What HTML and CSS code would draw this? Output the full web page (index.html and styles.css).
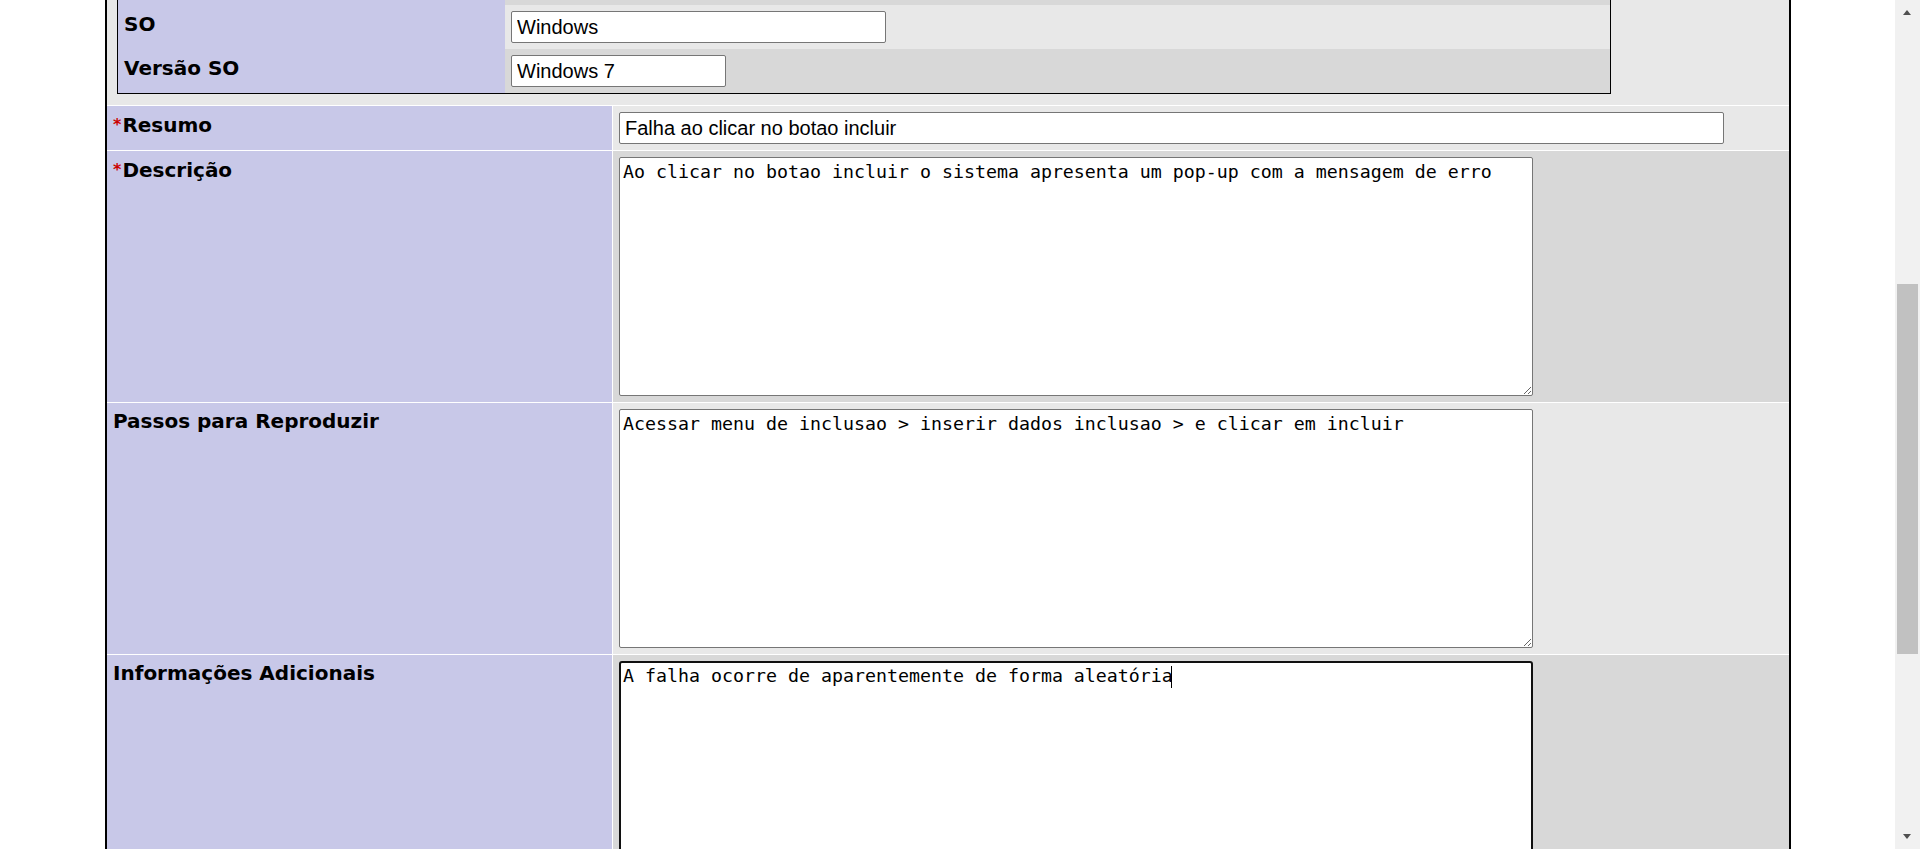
FILE: index.html
```html
<!DOCTYPE html>
<html lang="pt-BR">
<head>
<meta charset="utf-8">
<title>Reportar Caso</title>
<link rel="stylesheet" href="styles.css">
</head>
<body>
<div class="page">
  <div class="form">
    <div class="row row-nested">
      <div class="nested">
        <div class="nrow nrow-dark nrow-cut"><div class="ncat"></div><div class="nval"></div></div>
        <div class="nrow nrow-light">
          <div class="ncat">SO</div>
          <div class="nval"><input class="field field-so" type="text" value="Windows"></div>
        </div>
        <div class="nrow nrow-dark">
          <div class="ncat">Versão SO</div>
          <div class="nval"><input class="field field-ver" type="text" value="Windows 7"></div>
        </div>
      </div>
    </div>
    <div class="row row-light row-input">
      <div class="cat"><span class="req">*</span>Resumo</div>
      <div class="val"><input class="field field-summary" type="text" value="Falha ao clicar no botao incluir"></div>
    </div>
    <div class="row row-dark">
      <div class="cat"><span class="req">*</span>Descrição</div>
      <div class="val"><textarea class="area">Ao clicar no botao incluir o sistema apresenta um pop-up com a mensagem de erro</textarea></div>
    </div>
    <div class="row row-light">
      <div class="cat">Passos para Reproduzir</div>
      <div class="val"><textarea class="area">Acessar menu de inclusao &gt; inserir dados inclusao &gt; e clicar em incluir</textarea></div>
    </div>
    <div class="row row-dark">
      <div class="cat">Informações Adicionais</div>
      <div class="val">
        <div class="area-wrap">
          <textarea class="area area-focused" id="info">A falha ocorre de aparentemente de forma aleatória</textarea>
          <span class="caret" style="left: calc(2px + 50ch)"></span>
        </div>
      </div>
    </div>
  </div>
  <div class="scrollbar">
    <div class="sb-arrow sb-up"></div>
    <div class="sb-thumb"></div>
    <div class="sb-arrow sb-down"></div>
  </div>
</div>
</body>
</html>
```

FILE: styles.css
```css
html, body {
  margin: 0;
  padding: 0;
  background: #ffffff;
  height: 849px;
  overflow: hidden;
}

.page {
  display: flex;
  height: 849px;
  font-family: "DejaVu Sans", Verdana, sans-serif;
}

.form {
  margin-left: 105px;
  width: 1682px;
  border-left: 2px solid #000;
  border-right: 2px solid #000;
  background: #ffffff;
  display: flex;
  flex-direction: column;
  gap: 1px;
  flex: none;
  height: 849px;
  overflow: hidden;
}

.row {
  display: flex;
  gap: 1px;
  flex: none;
}

.row-light .val { background: #e8e8e8; }
.row-dark .val { background: #d8d8d8; }

.cat {
  width: 505px;
  flex: none;
  background: #c8c8e8;
  box-sizing: border-box;
  padding: 7px 0 0 6px;
  font-weight: bold;
  font-size: 20px;
  line-height: 23px;
  color: #000;
}

.req {
  color: #cc0000;
  font-size: 16px;
  vertical-align: 2px;
  margin-right: 1px;
}

.val {
  flex: 1;
  box-sizing: border-box;
  padding: 6px;
}

.row-nested {
  background: #e8e8e8;
  padding: 0 0 11px 10px;
}

.nested {
  width: 1494px;
  box-sizing: border-box;
  border-left: 1px solid #000;
  border-right: 1px solid #000;
  border-bottom: 1px solid #000;
  display: flex;
  flex-direction: column;
}

.nrow {
  display: flex;
  height: 44px;
}

.nrow-cut { height: 5px; }

.ncat {
  width: 387px;
  flex: none;
  background: #c8c8e8;
  box-sizing: border-box;
  padding: 8px 0 0 6px;
  font-weight: bold;
  font-size: 20px;
  line-height: 23px;
  color: #000;
}

.nval {
  flex: 1;
  box-sizing: border-box;
  padding: 6px;
}

.nrow-light .nval { background: #e8e8e8; }
.nrow-dark .nval { background: #d8d8d8; }

.field {
  display: block;
  box-sizing: border-box;
  height: 32px;
  margin: 0;
  padding: 0 5px;
  border: 1px solid #767676;
  border-radius: 2px;
  background: #fff;
  font-family: "Liberation Sans", Arial, sans-serif;
  font-size: 20px;
  color: #000;
  outline: none;
}

.field-so { width: 375px; }
.field-ver { width: 215px; }
.field-summary { width: 1105px; }

.area {
  display: block;
  box-sizing: border-box;
  width: 914px;
  height: 239px;
  margin: 0;
  padding: 2px 3px 3px 3px;
  border: 1px solid #767676;
  border-radius: 2px;
  background: #fff;
  font-family: "DejaVu Sans Mono", "Liberation Mono", monospace;
  font-size: 18.27px;
  line-height: 23px;
  color: #000;
  resize: both;
  outline: none;
}

.area-focused {
  border: 2px solid #101010;
  padding: 1px 2px 2px 2px;
  border-radius: 3px;
}

.area-wrap {
  position: relative;
  width: 914px;
  font-family: "DejaVu Sans Mono", "Liberation Mono", monospace;
  font-size: 18.27px;
}

.caret {
  position: absolute;
  top: 5px;
  width: 1px;
  height: 22px;
  background: #000;
}

.scrollbar {
  position: fixed;
  top: 0;
  right: 0;
  width: 25px;
  height: 849px;
  background: #f1f1f1;
}

.sb-thumb {
  position: absolute;
  left: 2px;
  top: 284px;
  width: 21px;
  height: 370px;
  background: #c1c1c1;
}

.sb-arrow {
  position: absolute;
  left: 8px;
  width: 0;
  height: 0;
  border-left: 4px solid transparent;
  border-right: 4px solid transparent;
}

.sb-up {
  top: 10px;
  border-bottom: 5px solid #505050;
}

.sb-down {
  bottom: 10px;
  border-top: 5px solid #505050;
}
```
